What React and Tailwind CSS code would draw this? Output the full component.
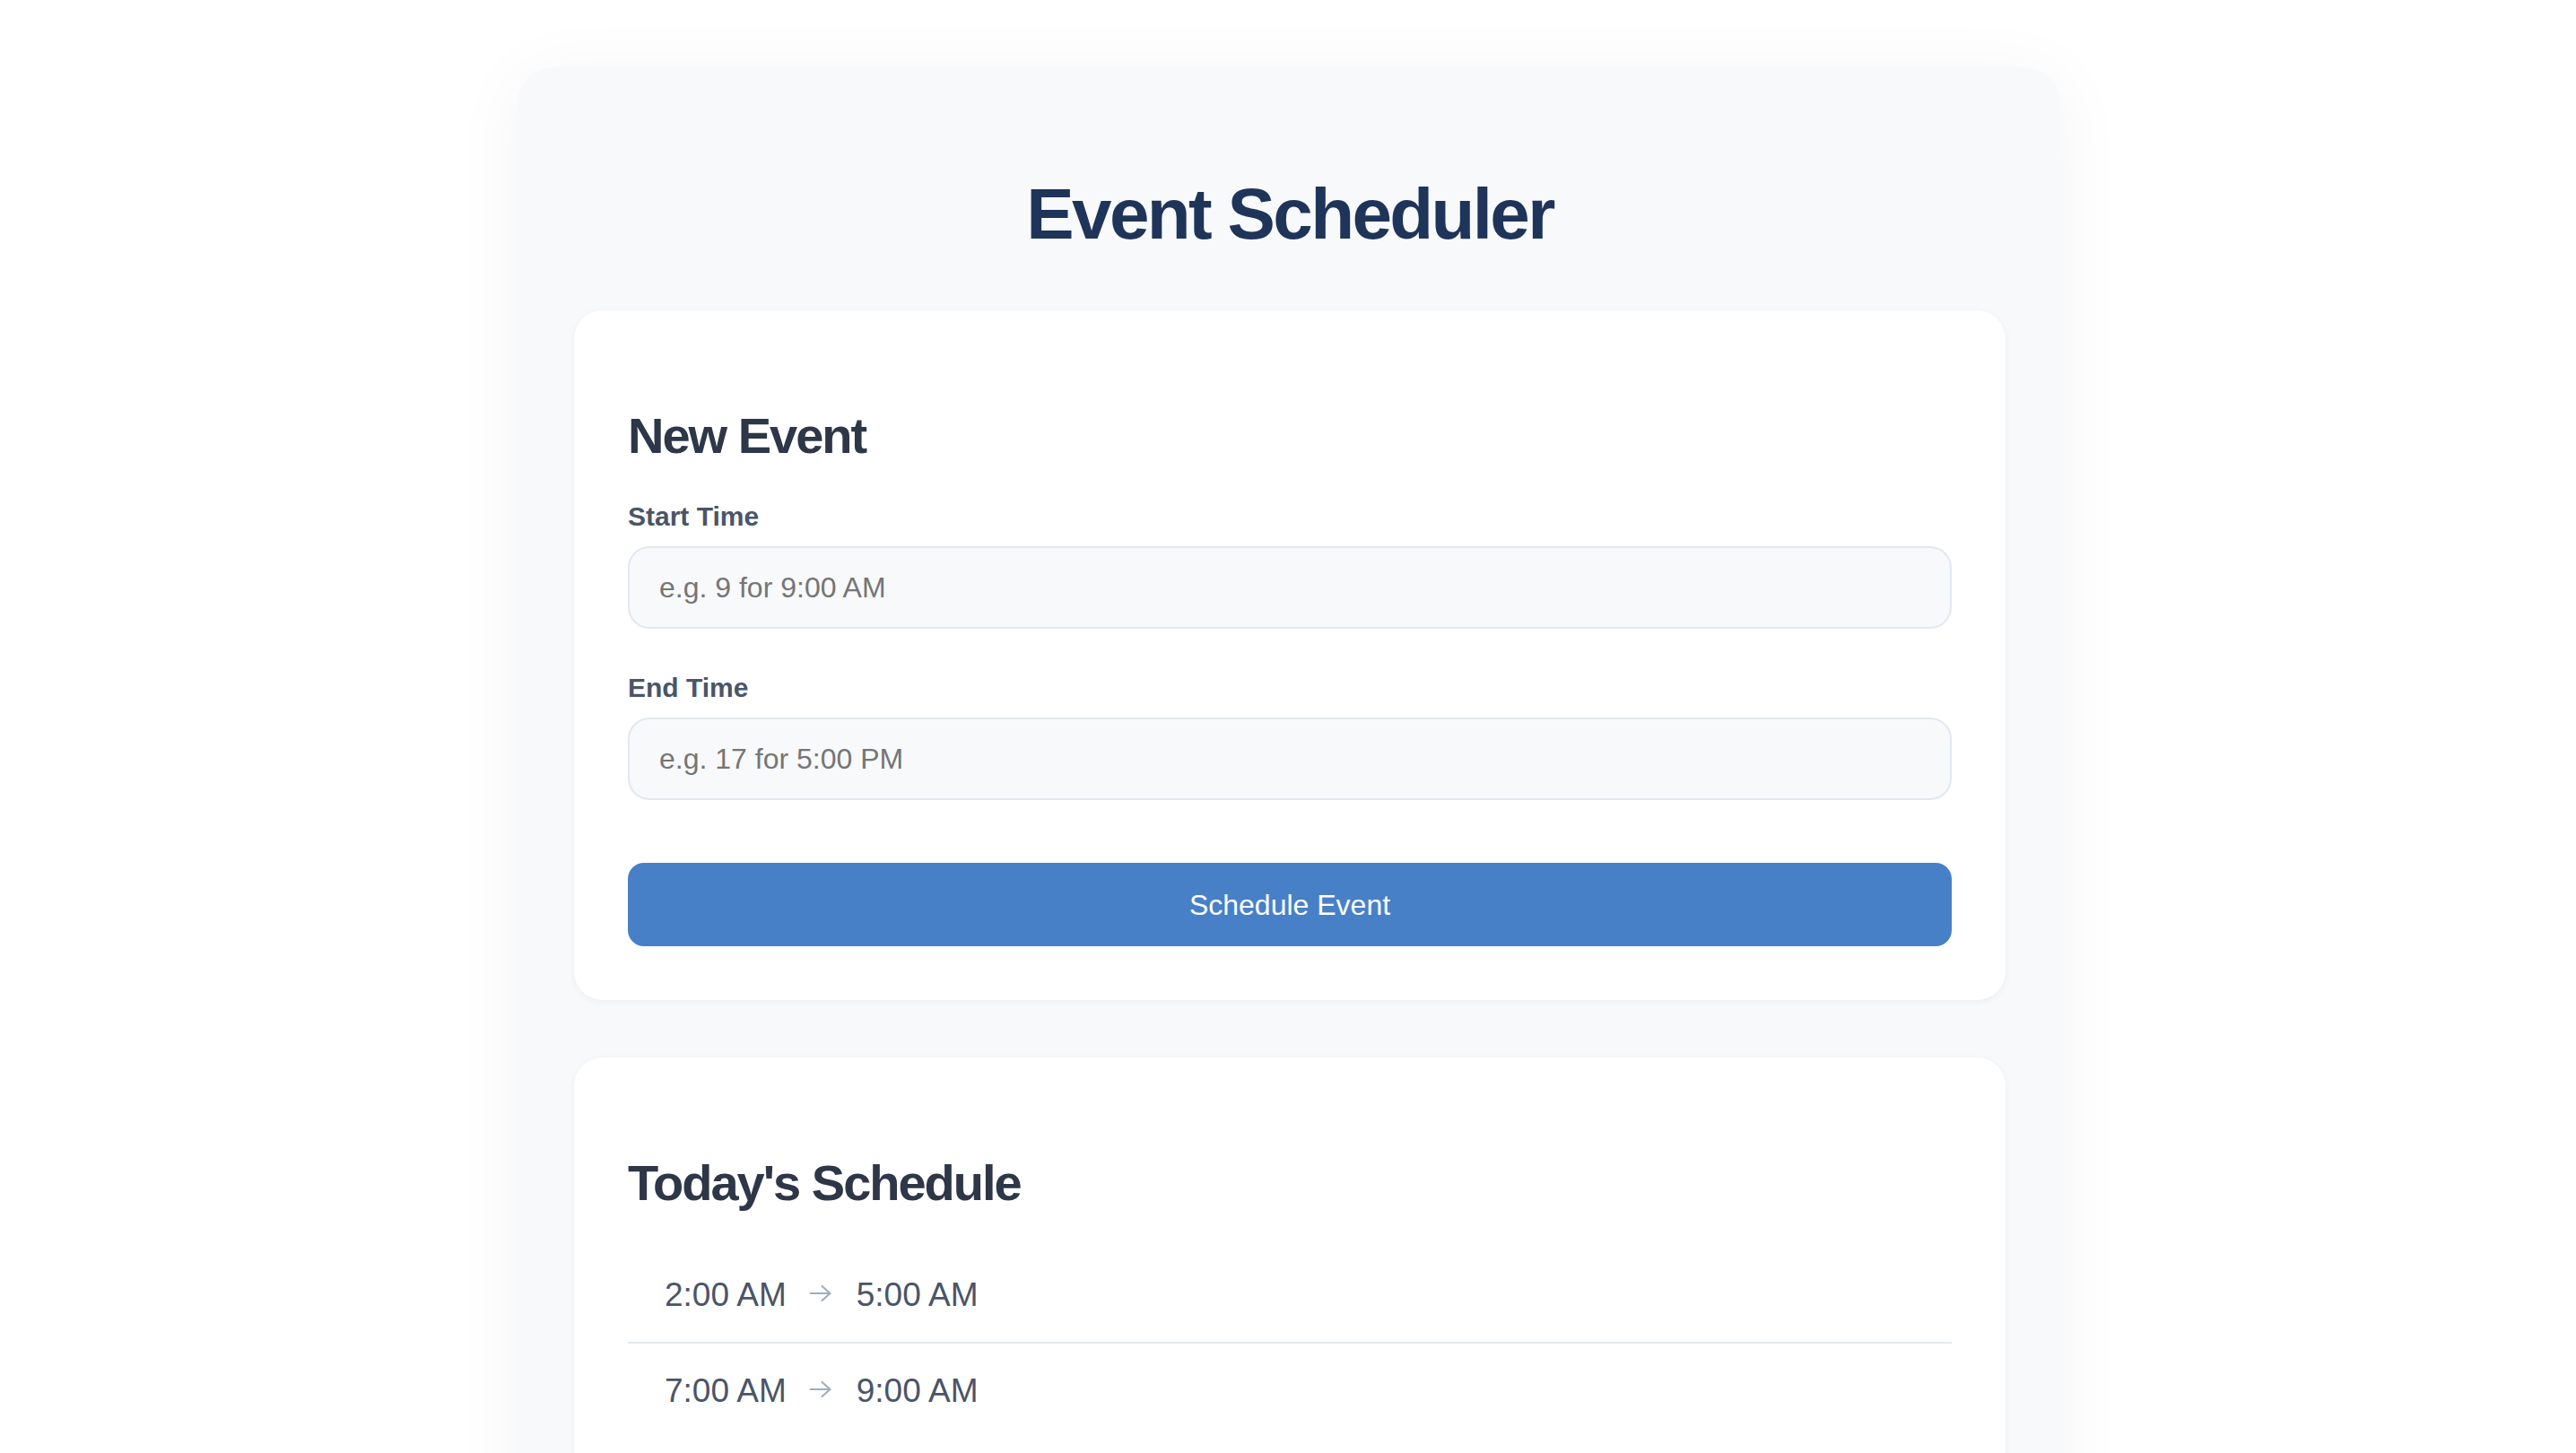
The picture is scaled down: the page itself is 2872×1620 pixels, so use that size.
import React from 'react';

const events = [
  { start: '2:00 AM', end: '5:00 AM' },
  { start: '7:00 AM', end: '9:00 AM' },
];

function Arrow() {
  return (
    <svg width="25" height="20" viewBox="0 0 25 20" fill="none" className="ml-[25px] mr-[28px] -translate-y-[2px]">
      <path d="M1.5 10H23.5M14.5 2L23.5 10L14.5 18" stroke="#a0aec0" strokeWidth="2.2" strokeLinecap="round" strokeLinejoin="round" />
    </svg>
  );
}

export default function App() {
  return (
    <div className="min-h-screen bg-white pt-[75px] font-['Liberation_Sans',Arial,sans-serif]">
      <div className="ml-[577px] w-[1720px] rounded-[40px] bg-[#f8f9fb] pl-[63px] pr-[61px] pt-[124px] pb-[60px] shadow-[0_10px_80px_rgba(0,0,0,0.05)]">
        <h1 className="text-center text-[80px] font-bold leading-none tracking-[-0.033em] text-[#1f3459]">
          Event Scheduler
        </h1>

        {/* New event form */}
        <div className="mt-[67px] rounded-[32px] bg-white p-[60px] shadow-[0_2px_8px_rgba(0,0,0,0.05)]">
          <h2 className="mt-[52px] text-[56px] font-bold leading-none tracking-[-2px] text-[#2d3748]">
            New Event
          </h2>

          <label className="mt-[47px] block text-[30px] font-semibold leading-none text-[#4a5568]">
            Start Time
          </label>
          <input
            type="text"
            placeholder="e.g. 9 for 9:00 AM"
            className="mt-[18px] block h-[92px] w-full rounded-[24px] border-2 border-[#e2e8f0] bg-[#f7f9fb] pl-[33px] pr-[32px] text-[32px] text-[#2d3748] outline-none placeholder:text-[#757575]"
          />

          <label className="mt-[51px] block text-[30px] font-semibold leading-none text-[#4a5568]">
            End Time
          </label>
          <input
            type="text"
            placeholder="e.g. 17 for 5:00 PM"
            className="mt-[18px] block h-[92px] w-full rounded-[24px] border-2 border-[#e2e8f0] bg-[#f7f9fb] pl-[33px] pr-[32px] text-[32px] text-[#2d3748] outline-none placeholder:text-[#757575]"
          />

          <button className="mt-[70px] flex h-[93px] w-full items-center justify-center rounded-[18px] bg-[#4880c8] text-[32px] leading-none text-white">
            Schedule Event
          </button>
        </div>

        {/* Schedule list */}
        <div className="mt-[64px] rounded-[32px] bg-white p-[60px] shadow-[0_2px_8px_rgba(0,0,0,0.05)]">
          <h2 className="mt-[52px] text-[56px] font-bold leading-none tracking-[-2px] text-[#2d3748]">
            Today's Schedule
          </h2>
          <ul className="mt-[44px]">
            {events.map((ev, i) => (
              <li
                key={i}
                className={`flex items-center py-[34px] pl-[41px] text-[37px] font-medium leading-none text-[#4a5568] ${
                  i < events.length - 1 ? 'border-b-2 border-[#e2e8f0]' : ''
                }`}
              >
                <span>{ev.start}</span>
                <Arrow />
                <span>{ev.end}</span>
              </li>
            ))}
          </ul>
        </div>
      </div>
    </div>
  );
}
